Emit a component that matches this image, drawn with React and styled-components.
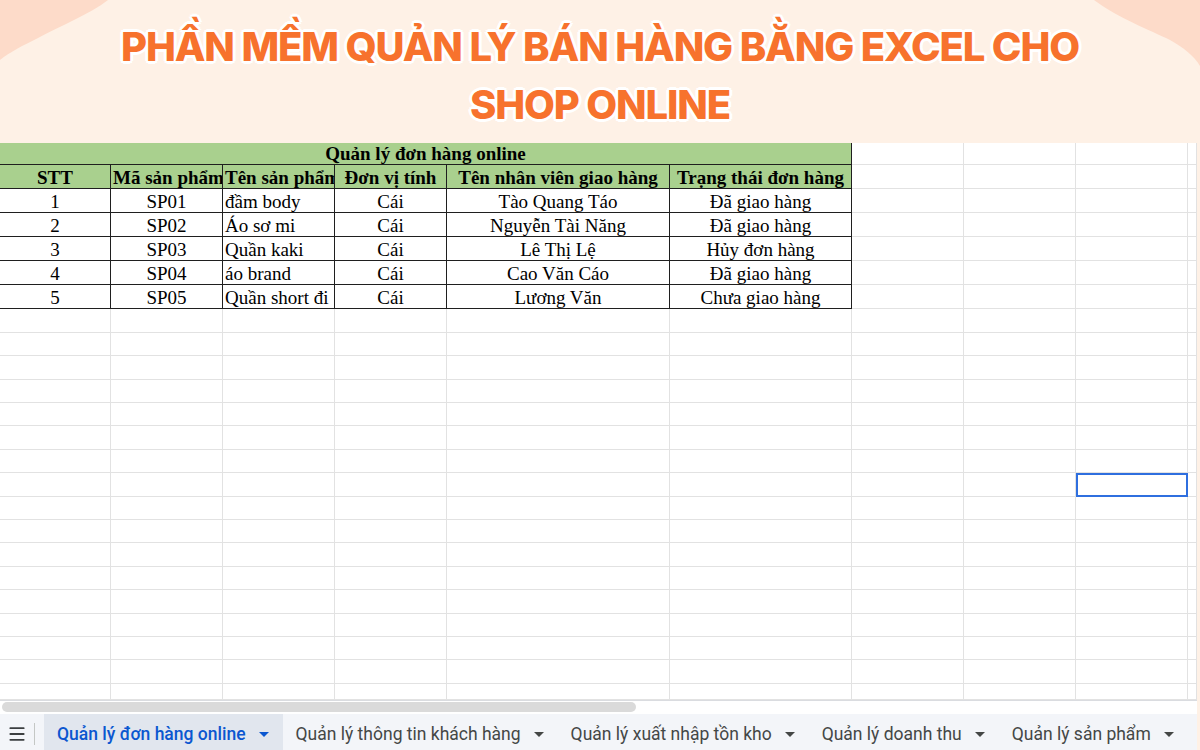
import React from "react";
import styled, { createGlobalStyle } from "styled-components";
import { Menu } from "lucide-react";

const COLS = [111, 112, 112, 112, 223, 182, 112, 112, 112, 9];
const GRID = COLS.map((w) => `${w}px`).join(" ");
const EMPTY_ROWS = [24, 23, 24, 23, 23, 24, 23, 24, 23, 23, 24, 23, 24, 23, 23, 24, 16];

const HEADERS = ["STT", "Mã sản phẩm", "Tên sản phẩm", "Đơn vị tính", "Tên nhân viên giao hàng", "Trạng thái đơn hàng"];

const ORDERS = [
  ["1", "SP01", "đầm body", "Cái", "Tào Quang Táo", "Đã giao hàng"],
  ["2", "SP02", "Áo sơ mi", "Cái", "Nguyễn Tài Năng", "Đã giao hàng"],
  ["3", "SP03", "Quần kaki", "Cái", "Lê Thị Lệ", "Hủy đơn hàng"],
  ["4", "SP04", "áo brand", "Cái", "Cao Văn Cáo", "Đã giao hàng"],
  ["5", "SP05", "Quần short đi", "Cái", "Lương Văn", "Chưa giao hàng"],
];

const TABS = [
  "Quản lý đơn hàng online",
  "Quản lý thông tin khách hàng",
  "Quản lý xuất nhập tồn kho",
  "Quản lý doanh thu",
  "Quản lý sản phẩm",
];

const Caret = ({ color }) => (
  <svg width="10" height="5" viewBox="0 0 10 5">
    <path d="M0 0 H10 L5 5 Z" fill={color} />
  </svg>
);

const App = () => {
  return (
    <>
      <GlobalStyle />
      <Page>
        <Banner>
          <Decor width="1200" height="143" viewBox="0 0 1200 143">
            <path d="M0 0 H108 C 90 14, 60 26, 38 38 C 22 46, 10 52, 0 60 Z" fill="#fddbc9" />
            <path d="M1094 0 C 1118 18, 1150 30, 1170 40 C 1184 48, 1194 56, 1200 66 V0 Z" fill="#fddbc9" />
          </Decor>
          <Title>
            PHẦN MỀM QUẢN LÝ BÁN HÀNG BẰNG EXCEL CHO
            <br />
            SHOP ONLINE
          </Title>
        </Banner>

        <Sheet>
          <Row $h={22}>
            <Cell $span={6} $bold $bg="#a9d08e" $dark>
              Quản lý đơn hàng online
            </Cell>
            {COLS.slice(6).map((_, i) => (
              <Cell key={i} />
            ))}
          </Row>
          <Row $h={24}>
            {HEADERS.map((h) => (
              <Cell key={h} $bold $bg="#a9d08e" $dark $low>
                {h}
              </Cell>
            ))}
            {COLS.slice(6).map((_, i) => (
              <Cell key={i} />
            ))}
          </Row>
          {ORDERS.map((row) => (
            <Row key={row[0]} $h={24}>
              {row.map((v, i) => (
                <Cell key={i} $dark $low $align={i === 2 ? "left" : "center"}>
                  {v}
                </Cell>
              ))}
              {COLS.slice(6).map((_, i) => (
                <Cell key={i} />
              ))}
            </Row>
          ))}
          {EMPTY_ROWS.map((h, r) => (
            <Row key={r} $h={h}>
              {COLS.map((_, c) => (
                <Cell key={c} $selected={r === 7 && c === 8} />
              ))}
            </Row>
          ))}
        </Sheet>

        <ScrollTrack>
          <Thumb />
        </ScrollTrack>

        <TabBar>
          <MenuButton>
            <Menu size={20} strokeWidth={2.2} color="#3c3f41" />
          </MenuButton>
          <Divider />
          {TABS.map((t, i) => (
            <Tab key={t} $active={i === 0}>
              {t}
              <Caret color={i === 0 ? "#0b57d0" : "#444746"} />
            </Tab>
          ))}
        </TabBar>
      </Page>
    </>
  );
};

export default App;

const GlobalStyle = createGlobalStyle`
  html, body {
    margin: 0;
    padding: 0;
    background: #fef1e6;
  }
  #root {
    width: 1200px;
    height: 750px;
    overflow: hidden;
  }
`;

const Page = styled.div`
  width: 1200px;
  height: 750px;
  display: flex;
  flex-direction: column;
  background: #fef1e6;
`;

const Banner = styled.header`
  position: relative;
  height: 143px;
  flex-shrink: 0;
  padding-top: 18px;
  box-sizing: border-box;
  text-align: center;
  overflow: hidden;
`;

const Decor = styled.svg`
  position: absolute;
  left: 0;
  top: 0;
`;

const Title = styled.h1`
  position: relative;
  margin: 0;
  font-family: Inter, "Noto Sans", sans-serif;
  font-weight: 800;
  font-size: 40px;
  line-height: 58px;
  letter-spacing: -1.15px;
  color: #f7722d;
  text-shadow:
    2px 0 0 #fff, -2px 0 0 #fff, 0 2px 0 #fff, 0 -2px 0 #fff,
    2px 2px 0 #fff, -2px -2px 0 #fff, 2px -2px 0 #fff, -2px 2px 0 #fff,
    3px 0 0 #fff, -3px 0 0 #fff, 0 3px 0 #fff, 0 -3px 0 #fff;
`;

const Sheet = styled.div`
  width: 1197px;
  height: 557px;
  flex-shrink: 0;
  background: #fff;
  overflow: hidden;
  font-family: "Liberation Serif", "Times New Roman", serif;
  font-size: 19px;
  color: #000;
`;

const Row = styled.div`
  display: grid;
  grid-template-columns: ${GRID};
  height: ${(p) => p.$h}px;
`;

const Cell = styled.div`
  grid-column: ${(p) => (p.$span ? `span ${p.$span}` : "auto")};
  position: relative;
  box-sizing: border-box;
  border-right: 1px solid ${(p) => (p.$dark ? "#1f1f1f" : "#e2e2e2")};
  border-bottom: 1px solid ${(p) => (p.$dark ? "#1f1f1f" : "#e2e2e2")};
  background: ${(p) => p.$bg || "transparent"};
  font-weight: ${(p) => (p.$bold ? 700 : 400)};
  text-align: ${(p) => p.$align || "center"};
  white-space: nowrap;
  overflow: hidden;
  padding: ${(p) => (p.$low ? "2px" : "0")} 2px 0 2px;
  line-height: 22px;
  outline: ${(p) => (p.$selected ? "2px solid #2f6fdf" : "none")};
  outline-offset: -2px;
`;

const ScrollTrack = styled.div`
  width: 1197px;
  height: 14px;
  flex-shrink: 0;
  box-sizing: border-box;
  background: #fff;
  border-top: 1px solid #dadce0;
  padding: 1px 2px;
`;

const Thumb = styled.div`
  width: 634px;
  height: 10px;
  border-radius: 5px;
  background: #dadada;
`;

const TabBar = styled.nav`
  width: 1197px;
  flex: 1;
  display: flex;
  align-items: stretch;
  background: #f3f5f9;
  font-family: Roboto, "Noto Sans", sans-serif;
  font-size: 17.5px;
`;

const MenuButton = styled.div`
  width: 34px;
  display: flex;
  align-items: center;
  justify-content: center;
  padding-top: 4px;
`;

const Divider = styled.div`
  width: 1px;
  margin: 9px 9px 5px 0;
  background: #c4c7c5;
`;

const Tab = styled.div`
  display: flex;
  align-items: center;
  gap: 13px;
  padding: 4px 14px 0 13px;
  background: ${(p) => (p.$active ? "#e1e6ee" : "transparent")};
  color: ${(p) => (p.$active ? "#0b57d0" : "#444746")};
  font-weight: ${(p) => (p.$active ? 500 : 400)};
  white-space: nowrap;
`;
